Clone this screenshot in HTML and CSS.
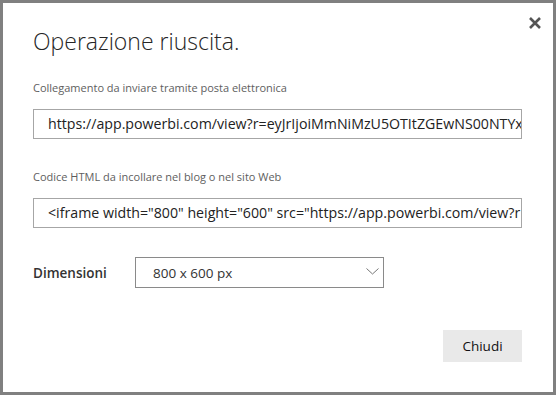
FILE: index.html
```html
<!DOCTYPE html>
<html lang="it">

<head>
    <meta charset="UTF-8">
    <title>Operazione riuscita</title>
    <link rel="stylesheet" href="styles.css">
</head>

<body>

    <div class="dialog">
        <div class="chiudi-x">
            <svg width="12" height="12" viewBox="0 0 12 12">
                <path d="M1 1 L11 11 M11 1 L1 11" stroke="#555" stroke-width="2.6" fill="none" />
            </svg>
        </div>

        <h1 class="titolo">Operazione riuscita.</h1>

        <p class="etichetta">Collegamento da inviare tramite posta elettronica</p>
        <div class="campo">https://app.powerbi.com/view?r=eyJrIjoiMmNiMzU5OTItZGEwNS00NTYx</div>

        <p class="etichetta secondo">Codice HTML da incollare nel blog o nel sito Web</p>
        <div class="campo">&lt;iframe width="800" height="600" src="https://app.powerbi.com/view?r</div>

        <div class="dimensioni">
            <span class="dim-label">Dimensioni</span>
            <div class="select">
                <span>800 x 600 px</span>
                <svg width="13" height="7" viewBox="0 0 13 7">
                    <path d="M0.5 0.5 L6.5 6 L12.5 0.5" stroke="#777" stroke-width="1" fill="none" />
                </svg>
            </div>
        </div>

        <div class="azioni">
            <button class="bottone">Chiudi</button>
        </div>
    </div>

</body>

</html>
```
FILE: styles.css
```css
* {
    margin: 0;
    box-sizing: border-box;
}

body {
    width: 556px;
    height: 395px;
    background-color: #fff;
    font-family: 'Segoe UI', 'Open Sans', sans-serif;
}

.dialog {
    position: relative;
    width: 556px;
    height: 395px;
    border: 3px solid #808080;
    background-color: #fff;
    padding: 22px 31px 30px 30px;
    display: flex;
    flex-direction: column;
}

.chiudi-x {
    position: absolute;
    top: 14px;
    right: 12px;
    width: 12px;
    height: 12px;
    display: flex;
}

.titolo {
    font-size: 23px;
    font-weight: 300;
    line-height: 32px;
    color: #262626;
}

.etichetta {
    margin-top: 23px;
    font-size: 11px;
    line-height: 16px;
    color: #5e5e5e;
}

.etichetta.secondo {
    margin-top: 30px;
}

.campo {
    margin-top: 13px;
    height: 30px;
    border: 1px solid #a6a6a6;
    padding: 0 1px 0 14px;
    font-size: 14.2px;
    line-height: 28px;
    color: #222;
    white-space: nowrap;
    overflow: hidden;
}

.dimensioni {
    margin-top: 29px;
    display: flex;
    align-items: center;
}

.dim-label {
    width: 102px;
    font-size: 13.5px;
    font-weight: 600;
    color: #333;
}

.select {
    width: 249px;
    height: 31px;
    border: 1px solid #8a8a8a;
    padding: 0 4px 0 17px;
    display: flex;
    align-items: center;
    justify-content: space-between;
    font-size: 13.5px;
    color: #333;
}

.select svg {
    margin-top: -3px;
}

.azioni {
    margin-top: auto;
    display: flex;
    justify-content: flex-end;
}

.bottone {
    width: 79px;
    height: 32px;
    border: none;
    background-color: #e9e9e9;
    font-family: 'Segoe UI', 'Open Sans', sans-serif;
    font-size: 13.5px;
    color: #111;
}
```
